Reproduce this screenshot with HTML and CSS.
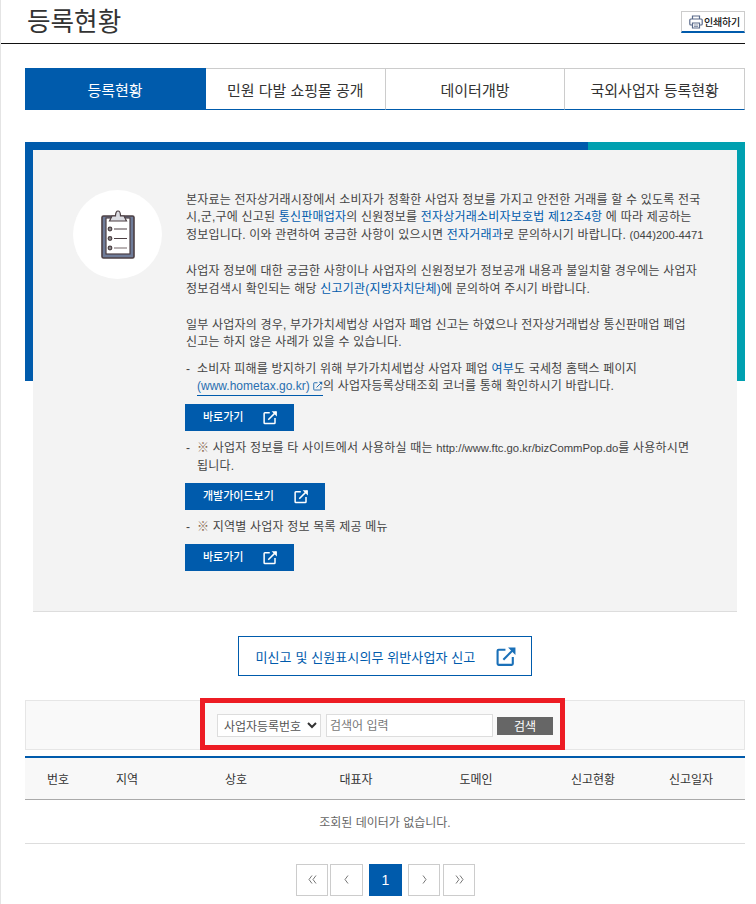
FILE: index.html
```html
<!DOCTYPE html>
<html lang="ko">
<head>
<meta charset="utf-8">
<title>등록현황</title>
<link rel="stylesheet" href="styles.css">
</head>
<body>
<svg class="defs" width="0" height="0" aria-hidden="true">
  <symbol id="ext" viewBox="0 0 20 20">
    <path d="M9 3.500H2.500a1 1 0 0 0-1 1v12.500a1 1 0 0 0 1 1H15a1 1 0 0 0 1-1v-6.500" fill="none" stroke="currentColor" stroke-width="2"/>
    <path d="M7 13 17.500 2.500" fill="none" stroke="currentColor" stroke-width="2"/>
    <path d="M11.500 1.500H18.500V8.500Z" fill="currentColor"/>
  </symbol>
</svg>
<div class="page">
  <header class="head">
    <h1>등록현황</h1>
    <button class="print">
      <svg width="14" height="14" viewBox="0 0 14 14" fill="none" stroke="#5a6a8a" stroke-width="1.200"><path d="M3.500 4V1h7v3"/><rect x="0.800" y="4" width="12.400" height="6" rx="1"/><path d="M3.500 8h7v5h-7z" fill="#fff"/><path d="M5 10h4M5 11.500h4" stroke-width=".7"/></svg>
      <span>인쇄하기</span>
    </button>
  </header>

  <main class="main">
    <nav class="tabs">
      <a class="tab on">등록현황</a>
      <a class="tab">민원 다발 쇼핑몰 공개</a>
      <a class="tab">데이터개방</a>
      <a class="tab">국외사업자 등록현황</a>
    </nav>

    <section class="frame">
      <div class="panel">
        <div class="circle">
          <svg width="34" height="49" viewBox="0 0 34 49">
            <rect x="1" y="6" width="32" height="42" rx="1.500" fill="#6f7c99" stroke="#4c3f43" stroke-width="1.600"/>
            <rect x="5" y="8" width="24" height="36" fill="#fff" stroke="#4c3f43" stroke-width="1.200"/>
            <path d="M8.500 11 11 6h3.500C14.500 2.500 15.500 1 17 1s2.500 1.500 2.500 5H23l2.500 5z" fill="#dcdde3" stroke="#4c3f43" stroke-width="1.200"/>
            <g fill="#8a8a8a" stroke="#4c3f43" stroke-width="1.200"><circle cx="9" cy="19" r="1.800"/><circle cx="9" cy="28.500" r="1.800"/><circle cx="9" cy="38" r="1.800"/></g>
            <path d="M13 19h13M13 28.500h13" stroke="#4c3f43" stroke-width="1.200"/>
            <path d="M13 38h13" stroke="#8b7f80" stroke-width="1.200"/>
          </svg>
        </div>
        <div class="copy">
          <p>본자료는 전자상거래시장에서 소비자가 정확한 사업자 정보를 가지고 안전한 거래를 할 수 있도록 전국<br>시,군,구에 신고된 <a>통신판매업자</a>의 신원정보를 <a>전자상거래소비자보호법 제12조4항</a> 에 따라 제공하는<br>정보입니다. 이와 관련하여 궁금한 사항이 있으시면 <a>전자거래과</a>로 문의하시기 바랍니다. <span class="lat">(044)200-4471</span></p>
          <p>사업자 정보에 대한 궁금한 사항이나 사업자의 신원정보가 정보공개 내용과 불일치할 경우에는 사업자<br>정보검색시 확인되는 해당 <a>신고기관(지방자치단체)</a>에 문의하여 주시기 바랍니다.</p>
          <p>일부 사업자의 경우, 부가가치세법상 사업자 폐업 신고는 하였으나 전자상거래법상 통신판매업 폐업<br>신고는 하지 않은 사례가 있을 수 있습니다.</p>
          <div class="item first">
            <span class="dash">-</span>
            <div>소비자 피해를 방지하기 위해 부가가치세법상 사업자 폐업 <a>여부</a>도 국세청 홈택스 페이지<br><a class="site">(www.hometax.go.kr) <svg class="mini"><use href="#ext"/></svg></a>의 사업자등록상태조회 코너를 통해 확인하시기 바랍니다.</div>
          </div>
          <a class="go one"><span>바로가기</span><svg class="go-ic"><use href="#ext"/></svg></a>
          <div class="item">
            <span class="dash">-</span>
            <div><span class="mark">※</span> 사업자 정보를 타 사이트에서 사용하실 때는 <span class="lat">http://www.ftc.go.kr/bizCommPop.do</span>를 사용하시면<br>됩니다.</div>
          </div>
          <a class="go wide"><span>개발가이드보기</span><svg class="go-ic"><use href="#ext"/></svg></a>
          <div class="item">
            <span class="dash">-</span>
            <div><span class="mark">※</span> 지역별 사업자 정보 목록 제공 메뉴</div>
          </div>
          <a class="go last"><span>바로가기</span><svg class="go-ic"><use href="#ext"/></svg></a>
        </div>
      </div>
    </section>

    <div class="report-wrap">
      <a class="report"><span>미신고 및 신원표시의무 위반사업자 신고</span><svg class="report-ic"><use href="#ext"/></svg></a>
    </div>

    <div class="search">
      <form class="search-form">
        <span class="select"><span>사업자등록번호</span><svg width="10" height="7" viewBox="0 0 10 7" fill="none" stroke="#333" stroke-width="2"><path d="M1 1l4 4 4-4"/></svg></span>
        <input class="input" type="text" placeholder="검색어 입력">
        <button class="search-btn" type="button">검색</button>
      </form>
    </div>

    <table class="list">
      <thead>
        <tr>
          <th class="c1">번호</th><th class="c2">지역</th><th class="c3">상호</th><th class="c4">대표자</th><th class="c5">도메인</th><th class="c6">신고현황</th><th class="c7">신고일자</th>
        </tr>
      </thead>
      <tbody>
        <tr><td colspan="7">조회된 데이터가 없습니다.</td></tr>
      </tbody>
    </table>

    <nav class="pager">
      <a class="pg"><svg width="9" height="9" viewBox="0 0 9 9" fill="none" stroke="#777"><path d="M4 .5 1 4.500l3 4M8 .5 5 4.500l3 4"/></svg></a>
      <a class="pg"><svg width="5" height="9" viewBox="0 0 5 9" fill="none" stroke="#777"><path d="M4 .5 1 4.500l3 4"/></svg></a>
      <a class="pg cur">1</a>
      <a class="pg"><svg width="5" height="9" viewBox="0 0 5 9" fill="none" stroke="#777"><path d="M1 .5 4 4.500l-3 4"/></svg></a>
      <a class="pg"><svg width="9" height="9" viewBox="0 0 9 9" fill="none" stroke="#777"><path d="M1 .5 4 4.500l-3 4M5 .5 8 4.500l-3 4"/></svg></a>
    </nav>
  </main>
</div>
</body>
</html>
```
FILE: styles.css
```css
*, *::before, *::after { box-sizing: border-box; }
html, body { margin: 0; padding: 0; background: #fff; }
body {
  font-family: "Liberation Sans", "Noto Sans CJK KR", sans-serif;
  color: #333;
  height: 904px;
  overflow: hidden;
}
.defs { position: absolute; }
.page {
  width: 745px;
  height: 904px;
  border-left: 1px solid #e4e4e4;
}
.head {
  height: 44px;
  border-bottom: 1px solid #111;
  display: flex;
  justify-content: space-between;
  align-items: flex-start;
  padding-left: 26px;
}
.head h1 {
  margin: 5px 0 0;
  font-size: 25.600px;
  line-height: 34px;
  font-weight: 400;
  color: #333;
}
.print {
  margin-top: 11px;
  width: 64px;
  height: 22px;
  border: 1px solid #ccc;
  border-bottom: 2px solid #005bac;
  background: #fff;
  padding: 0 0 0 7px;
  display: flex;
  align-items: center;
  gap: 1px;
  font: 500 10px "Liberation Sans", "Noto Sans CJK KR", sans-serif;
  color: #111;
  letter-spacing: -.2px;
}
.main { padding: 24px 0 0 24px; }
.tabs {
  display: flex;
  height: 42px;
}
.tab {
  flex: 1;
  display: flex;
  align-items: center;
  justify-content: center;
  border-top: 1px solid #ccc;
  border-right: 1px solid #ccc;
  border-bottom: 1px solid #005bac;
  font-size: 15px;
  color: #333;
}
.tab.on {
  flex: none;
  width: 181px;
  background: #005bac;
  border-color: #005bac;
  color: #fff;
}
.frame {
  position: relative;
  margin-top: 32px;
  padding: 8px 8px 0;
}
.frame::before {
  content: "";
  position: absolute;
  left: 0; top: 0;
  width: 563px;
  height: 239px;
  border-top: 8px solid #005bac;
  border-left: 8px solid #005bac;
}
.frame::after {
  content: "";
  position: absolute;
  right: 0; top: 0;
  width: 157px;
  height: 239px;
  border-top: 8px solid #00a0b0;
  border-right: 8px solid #00a0b0;
}
.panel {
  height: 462px;
  background: #f3f3f3;
  border-bottom: 1px solid #ddd;
  display: flex;
  padding: 40px 0 0 40px;
}
.circle {
  width: 89px;
  height: 89px;
  border-radius: 50%;
  background: #fff;
  display: flex;
  align-items: center;
  justify-content: center;
  flex: none;
}
.copy {
  margin: 0 0 0 24px;
  padding-top: 2px;
  font-size: 12px;
  letter-spacing: .2px;
  line-height: 17.400px;
  color: #444;
  white-space: nowrap;
}
.copy p { margin: 0 0 19px; }
.copy a { color: #005bac; }
.lat { font-size: 11.300px; letter-spacing: 0; }
.item { display: flex; }
.item.first { margin-top: -10px; }
.dash { width: 11px; flex: none; }
.copy .site {
  display: inline-block;
  border-bottom: 1px solid #005bac;
  line-height: 17px;
  height: 18px;
  letter-spacing: 0;
  color: #2a6fb0;
}
.mini { width: 10px; height: 10px; vertical-align: -1px; }
.copy .go {
  display: flex;
  width: 109px;
  height: 27px;
  margin: 8px 0 9px -1px;
  padding: 0 16px 0 18px;
  background: #005bac;
  align-items: center;
  justify-content: space-between;
  font-size: 11px;
  letter-spacing: 0;
  font-weight: 500;
  color: #fff;
}
.copy .go.wide { width: 140px; }
.go-ic { width: 15px; height: 15px; color: #fff; }
.mark { color: #8a6a50; }
.report-wrap {
  display: flex;
  justify-content: center;
  padding-top: 24px;
}
.report {
  width: 294px;
  height: 40px;
  margin-left: -1px;
  border: 1px solid #005bac;
  display: flex;
  align-items: center;
  justify-content: space-between;
  padding: 0 14px 0 17px;
  font-size: 13px;
  letter-spacing: .1px;
  color: #005bac;
}
.report-ic { width: 21px; height: 21px; color: #1a70b8; }
.search {
  margin-top: 24px;
  height: 50px;
  border: 1px solid #e6e6e6;
  background: #f9f9f9;
  display: flex;
  justify-content: center;
}
.search-form {
  width: 365px;
  height: 52px;
  margin: -3px 0 0 -5px;
  border: 5px solid #ed1c24;
  background: #f9f9f9;
  display: flex;
  align-items: center;
  padding: 3px 0 0 12px;
}
.select {
  width: 104px;
  height: 23px;
  border: 1px solid #ddd;
  background: #fff;
  display: flex;
  align-items: center;
  justify-content: space-between;
  padding: 0 3px 0 6px;
  font-size: 12px;
  letter-spacing: -.05px;
  color: #555;
}
.input {
  width: 167px;
  height: 23px;
  margin-left: 5px;
  border: 1px solid #ddd;
  background: #fff;
  padding: 0 3px;
  font: 12px "Liberation Sans", "Noto Sans CJK KR", sans-serif;
}
.input::placeholder { color: #777; opacity: 1; }
.search-btn {
  width: 56px;
  height: 18px;
  margin-left: 4px;
  border: 0;
  padding: 0;
  background: #666;
  color: #fff;
  font: 12px "Liberation Sans", "Noto Sans CJK KR", sans-serif;
}
.list {
  width: 720px;
  margin-top: 6px;
  border-collapse: collapse;
  table-layout: fixed;
  border-top: 2px solid #005bac;
  font-size: 12px;
}
.list th {
  height: 42px;
  background: #f8f8f8;
  border-bottom: 1px solid #aaa;
  font-weight: 400;
  color: #333;
  padding: 0;
}
.c1 { width: 66px; }
.c2 { width: 72px; }
.c3 { width: 146px; }
.c4 { width: 94px; }
.c5 { width: 146px; }
.c6 { width: 88px; }
.c7 { width: 108px; }
.list td {
  height: 44px;
  text-align: center;
  border-bottom: 1px solid #ddd;
  color: #666;
  padding: 0;
}
.pager {
  display: flex;
  justify-content: center;
  margin-top: 20px;
  margin-left: 1px;
}
.pg {
  width: 32px;
  height: 32px;
  margin-right: 3px;
  border: 1px solid #ccc;
  display: flex;
  align-items: center;
  justify-content: center;
}
.pg:first-child { margin-right: 2px; }
.pg:nth-child(2) { width: 33px; margin-right: 6px; }
.pg:last-child { margin-right: 0; }
.pg.cur {
  width: 33px;
  margin-right: 6px;
  background: #005bac;
  border-color: #005bac;
  color: #fff;
  font-size: 14px;
  font-weight: 500;
}
```
